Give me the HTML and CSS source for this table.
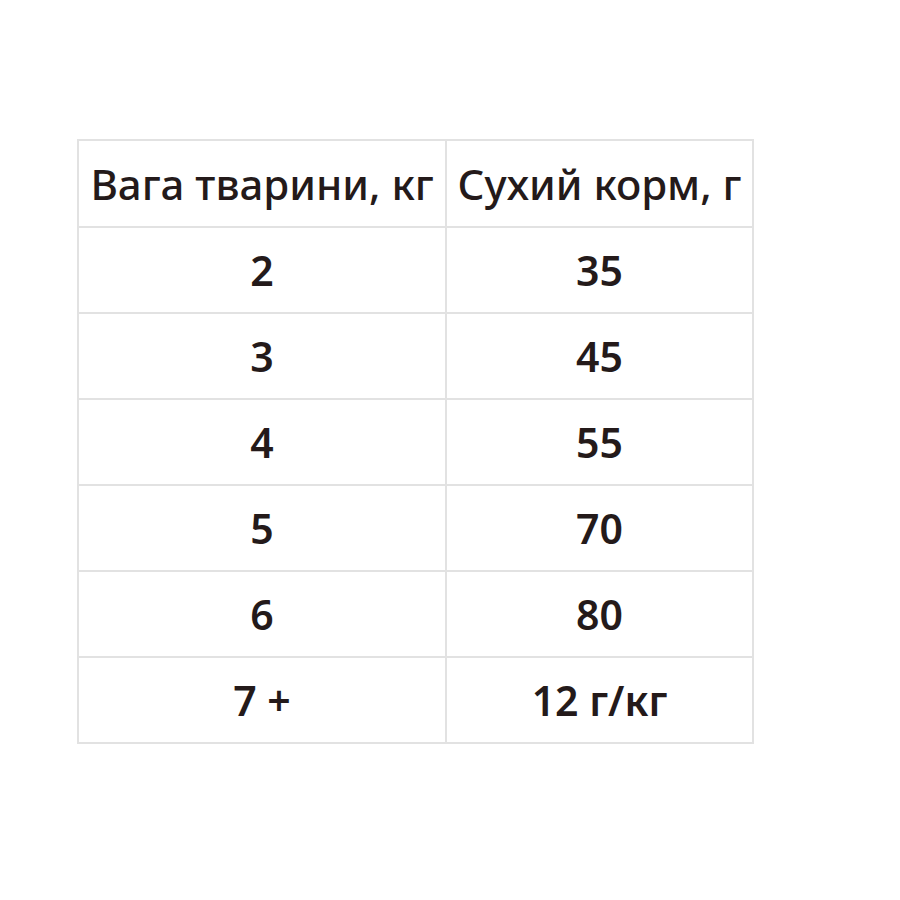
FILE: index.html
```html
<!DOCTYPE html>
<html>
<head>
<meta charset="utf-8">
<link rel="stylesheet" href="styles.css">
</head>
<body>
<table class="feed">
<thead>
<tr><th>Вага тварини, кг</th><th>Сухий корм, г</th></tr>
</thead>
<tbody>
<tr><td>2</td><td>35</td></tr>
<tr><td>3</td><td>45</td></tr>
<tr><td>4</td><td>55</td></tr>
<tr><td>5</td><td>70</td></tr>
<tr><td>6</td><td>80</td></tr>
<tr><td>7 +</td><td>12 г/кг</td></tr>
</tbody>
</table>
</body>
</html>
```
FILE: styles.css
```css
html, body {
  margin: 0;
  padding: 0;
  background: #fff;
}
body {
  padding: 139px 0 0 77px;
}
.feed {
  border-collapse: collapse;
  font-family: "Noto Sans", sans-serif;
  color: #241a1a;
}
.feed th, .feed td {
  border: 2px solid #e2e2e2;
  padding: 0;
  text-align: center;
  white-space: nowrap;
}
.feed th {
  height: 85px;
  font-size: 42px;
  font-weight: 500;
}
.feed td {
  height: 84px;
  font-size: 41px;
  font-weight: 600;
}
.feed th:first-child, .feed td:first-child {
  width: 366px;
}
.feed th:last-child, .feed td:last-child {
  width: 305px;
}
```
